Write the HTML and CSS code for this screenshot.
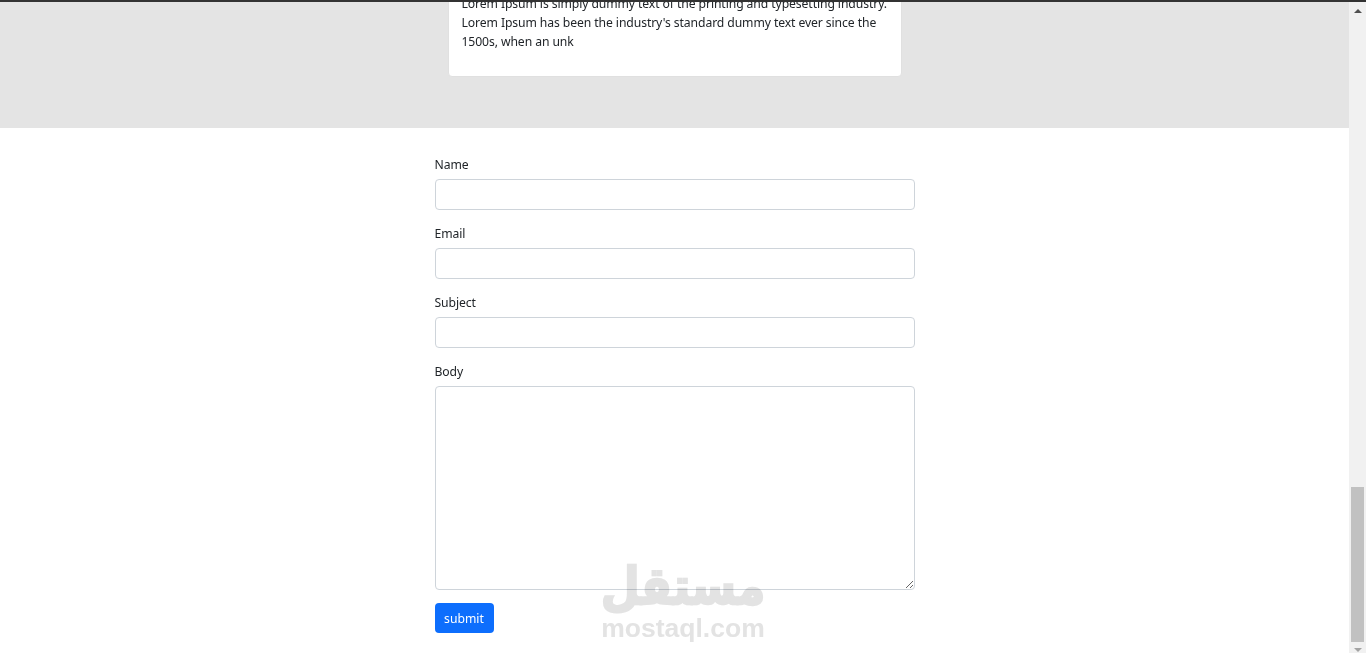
FILE: index.html
```html
<!DOCTYPE html>
<html>
    <head>
        <title>contact</title>
        <link rel="stylesheet" href="styles.css">
    </head>
    <body>
        <div class="topline"></div>
        <div class="window">
            <main class="page">
                <section class="posts">
                    <div class="card">
                        <p>Lorem Ipsum is simply dummy text of the printing and typesetting industry. Lorem Ipsum has been the industry's standard dummy text ever since the 1500s, when an unk</p>
                    </div>
                </section>
                <form class="contact">
                    <div class="field">
                        <label for="name">Name</label>
                        <input id="name" type="text">
                    </div>
                    <div class="field">
                        <label for="email">Email</label>
                        <input id="email" type="text">
                    </div>
                    <div class="field">
                        <label for="subject">Subject</label>
                        <input id="subject" type="text">
                    </div>
                    <div class="field">
                        <label for="body">Body</label>
                        <textarea id="body"></textarea>
                    </div>
                    <button type="button" class="submit">submit</button>
                </form>
            </main>
            <div class="scrollbar">
                <span class="arrow arrow-up"></span>
                <span class="thumb"></span>
                <span class="arrow arrow-down"></span>
            </div>
        </div>
        <div class="watermark">
            <span class="mark-ar" lang="ar" dir="rtl">مستقل</span>
            <span class="mark-en">mostaql.com</span>
        </div>
    </body>
</html>
```

FILE: styles.css
```css
*{
    margin: 0;
    box-sizing: border-box;
}
html,body{
    height: 100%;
    overflow: hidden;
}
body{
    display: flex;
    flex-direction: column;
    background-color: white;
    color: #212529;
    font-family: "Noto Sans", "Open Sans", sans-serif;
    font-size: 12.2px;
    letter-spacing: -0.1px;
    line-height: 19px;
}
.topline{
    height: 2px;
    background-color: #333;
}
.window{
    display: flex;
    flex: 1;
    min-height: 0;
}
.page{
    flex: 1;
    min-width: 0;
}
.posts{
    display: flex;
    flex-direction: column;
    align-items: center;
    justify-content: flex-end;
    height: 126px;
    padding-bottom: 51px;
    overflow: hidden;
    background-color: #e4e4e4;
}
.card{
    flex-shrink: 0;
    width: 454px;
    padding: 0 10px 25px 13px;
    background-color: white;
    border: 1px solid #e0e0e0;
    border-radius: 4px;
}
.contact{
    display: flex;
    flex-direction: column;
    width: 480px;
    margin: 0 auto;
    padding-top: 26px;
}
.field{
    display: flex;
    flex-direction: column;
    margin-bottom: 8px;
}
.field label{
    height: 25px;
    padding-top: 1px;
}
.field input,.field textarea{
    display: block;
    width: 100%;
    height: 31px;
    padding: 4px 10px;
    border: 1px solid #ced4da;
    border-radius: 4px;
    background-color: white;
    font: inherit;
}
.field input{
    margin-bottom: 5px;
}
.field textarea{
    height: 204px;
    margin-bottom: 5px;
}
.submit{
    width: 59px;
    height: 30px;
    padding: 0;
    border: 0;
    border-radius: 4px;
    background-color: #0d6efd;
    color: white;
    font: inherit;
}
.scrollbar{
    display: flex;
    flex-direction: column;
    align-items: center;
    width: 17px;
    background-color: #f1f1f1;
}
.arrow{
    width: 0;
    height: 0;
    border-left: 4px solid transparent;
    border-right: 4px solid transparent;
}
.arrow-up{
    margin-top: 7px;
    border-bottom: 4px solid #505050;
}
.thumb{
    width: 13px;
    height: 155px;
    margin-top: auto;
    background-color: #c1c1c1;
}
.arrow-down{
    margin-top: 6px;
    margin-bottom: 1px;
    border-top: 4px solid #a3a3a3;
}
.watermark{
    position: absolute;
    left: 600px;
    top: 563px;
    display: flex;
    flex-direction: column;
    align-items: center;
    width: 166px;
    color: #e3e3e3;
    font-weight: bold;
    letter-spacing: 0;
    mix-blend-mode: multiply;
    pointer-events: none;
}
.mark-ar{
    height: 48px;
    margin-bottom: 5px;
    font-family: "DejaVu Sans", sans-serif;
    font-size: 45px;
    line-height: 48px;
    -webkit-text-stroke: 2px #e3e3e3;
    transform: scaleY(1.15);
}
.mark-en{
    font-family: "Liberation Sans", sans-serif;
    font-size: 26.5px;
    line-height: 24px;
}
```
